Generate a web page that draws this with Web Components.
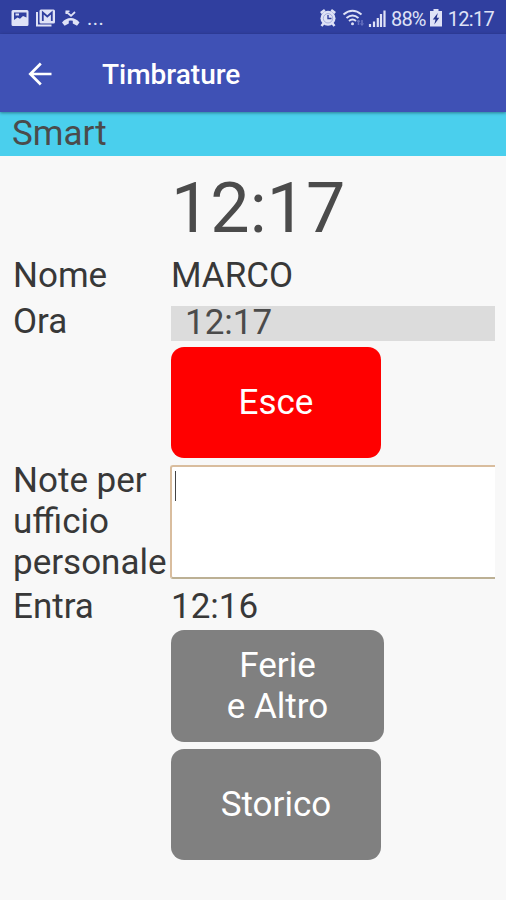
<!DOCTYPE html>
<html lang="it">
<head>
<meta charset="utf-8">
<title>Timbrature</title>
<style>
html,body{margin:0;height:100%;background:#f8f8f8}
body{font-family:Roboto,"Liberation Sans",sans-serif;color:#383838;overflow:hidden}
</style>
</head>
<body>
<time-app></time-app>
<script>
const define = (name, html) => customElements.define(name, class extends HTMLElement {
  constructor() {
    super();
    const t = document.createElement('template');
    t.innerHTML = html;
    this.attachShadow({mode: 'open'}).append(t.content.cloneNode(true));
  }
});

define('status-bar', `
<style>
:host{display:flex;justify-content:space-between;box-sizing:border-box;height:34px;padding:0 12px 0 11px;background:#303f9f;color:#dfe2f6;font-size:20px;line-height:22px}
.side{display:flex;align-items:flex-start;padding-top:8px}
svg{display:block;flex:none}
.dots{margin-left:6px;line-height:21px;letter-spacing:.5px}
.pct{margin-left:5px;letter-spacing:-.8px}
.clock{margin-left:6px;letter-spacing:-.7px}
</style>
<div class="side">
 <svg width="70" height="20" viewBox="11 8 70 20" fill="#dfe2f6">
  <path fill-rule="evenodd" d="M13 10h14a1.500 1.500 0 0 1 1.500 1.500v13a1.500 1.500 0 0 1-1.500 1.500h-14a1.500 1.500 0 0 1-1.500-1.500v-13a1.500 1.500 0 0 1 1.500-1.500zM14 12.500v7.500l3.500-2.500 2.500 1.200 3-2.700 3.500 1.500v-5z"/>
  <path d="M15.500 13.500h3.500v2h-3.500z"/>
  <path d="M37 12v13.500h14.500" fill="none" stroke="#dfe2f6" stroke-width="2"/>
  <rect x="39.500" y="9.500" width="15.500" height="14" rx="1.500"/>
  <path d="M42.800 21v-8.500l4.500 4 4.500-4v8.500" fill="none" stroke="#303f9f" stroke-width="1.800"/>
  <path d="M66 11.500l5 4.300 4-3.800" fill="none" stroke="#dfe2f6" stroke-width="1.800"/>
  <path d="M65.500 10.500h4v1.500h-2.200v2h-1.800z"/>
  <path d="M62 22.500c4.500-6 13-6 17.500 0l-2.500 3.200-4.200-2.300v-2.600q-2-.6-4 0v2.600l-4.200 2.300z"/>
 </svg>
 <span class="dots">...</span>
</div>
<div class="side">
 <svg width="67" height="20" viewBox="319 8 67 20" fill="none" stroke="#dfe2f6">
  <circle cx="328" cy="18.300" r="7.500" fill="#dfe2f6" stroke="none"/>
  <path d="M320.800 13l4-3M331.200 10l4 3M323.500 23.500l-2 2.500M332.500 23.500l2 2.500" stroke-width="2.500"/>
  <circle cx="328" cy="18.300" r="4.700" stroke="#8d96d0" stroke-width=".7"/>
  <path d="M328 15v3.500h3.500" stroke="#303f9f" stroke-width="1.400"/>
  <path d="M343.500 14.500q9-7.500 18 0" stroke-width="2"/>
  <path d="M346.500 18q6-5 12 0" stroke-width="2"/>
  <path d="M349 21q3.500-3 7 0" stroke-width="1.900"/>
  <circle cx="352.500" cy="23.700" r="1.500" fill="#dfe2f6" stroke="none"/>
  <path d="M358.500 20v5M362 20v5" stroke="#6974c2" stroke-width="1.500"/>
  <path d="M357 22l1.500-2 1.500 2M360.500 23.500l1.500 2 1.500-2" stroke="#6974c2"/>
  <path d="M370 24v3M374 21.500v5.500M377.800 18v9M381 14v13M384.500 10.500v16.500" stroke-width="2.200"/>
 </svg>
 <span class="pct">88%</span>
 <svg width="12" height="20" viewBox="429 8 12 20" style="margin-left:4px">
  <path fill="#dfe2f6" d="M432.500 9h5v2h3.500v15.500h-12v-15.500h3.500z"/>
  <path fill="#26338c" d="M436.800 13l-5 6.500h2.700l-1.200 5 5-6.700h-2.600z"/>
 </svg>
 <span class="clock">12:17</span>
</div>`);

define('app-bar', `
<style>
:host{display:flex;align-items:center;height:78px;background:#3f51b5;color:#fff;padding:0 28px;box-shadow:0 1px 3px #0006;position:relative;font-size:28px;font-weight:500;line-height:34px}
svg{display:block;margin:1px 50px 0 0}
.title{padding-top:4px}
</style>
<svg width="24" height="24" viewBox="0 0 24 24" fill="none" stroke="#fff" stroke-width="2.700"><path d="M23.500 12H2.500M12.800 1.500L2.300 12l10.500 10.500"/></svg>
<div class="title"><slot></slot></div>`);

define('section-title', `
<style>:host{display:block;height:44px;background:#4acfed;color:#4b4b4b;padding-left:12px;font-size:35px;line-height:44px}</style>
<slot></slot>`);

define('form-row', `
<style>
:host{display:grid;grid-template-columns:158px 1fr;align-items:start;padding:0 11px 0 13px;font-size:35px;line-height:41px}
</style>
<div><slot name="label"></slot></div><div><slot></slot></div>`);

define('big-clock', `
<style>:host{display:block;font-size:70px;line-height:82px;padding-top:11px;height:87px;color:#4b4b4b}</style>
<slot></slot>`);

define('time-field', `
<style>:host{display:block;height:35px;margin-top:5px;background:#dcdcdc;color:#4b4b4b;line-height:33px;padding-left:14px}</style>
<slot></slot>`);

define('note-field', `
<style>
:host{display:block;box-sizing:border-box;height:114px;margin:5px 0 0 -1px;background:#fff;border:2px solid #d9bd9e;border-right:0;border-bottom-color:#bcb094;border-radius:3px 0 0 3px;padding:4px 0 0 3px}
i{display:block;width:1px;height:30px;background:#444}
</style><i></i>`);

define('action-button', `
<style>
:host{display:flex;align-items:center;justify-content:center;text-align:center;box-sizing:border-box;width:210px;height:111px;border-radius:13px;background:var(--fill,#808080);color:#fff}
</style><div><slot></slot></div>`);

define('time-app', `
<style>
:host{display:flex;flex-direction:column;height:900px;background:#f8f8f8}
.form{display:grid;grid-template-rows:98px 47px 46px 113px 125px 45px 119px 112px}
.wide{width:213px;height:112px}
.lower{padding-top:1px}
</style>
<status-bar></status-bar>
<app-bar>Timbrature</app-bar>
<section-title>Smart</section-title>
<div class="form">
 <form-row><big-clock>12:17</big-clock></form-row>
 <form-row class="lower"><span slot="label">Nome</span>MARCO</form-row>
 <form-row><span slot="label">Ora</span><time-field>12:17</time-field></form-row>
 <form-row><action-button style="--fill:#f00">Esce</action-button></form-row>
 <form-row><span slot="label">Note per<br>ufficio<br>personale</span><note-field></note-field></form-row>
 <form-row class="lower"><span slot="label">Entra</span>12:16</form-row>
 <form-row><action-button class="wide">Ferie<br>e Altro</action-button></form-row>
 <form-row><action-button>Storico</action-button></form-row>
</div>`);
</script>
</body>
</html>
